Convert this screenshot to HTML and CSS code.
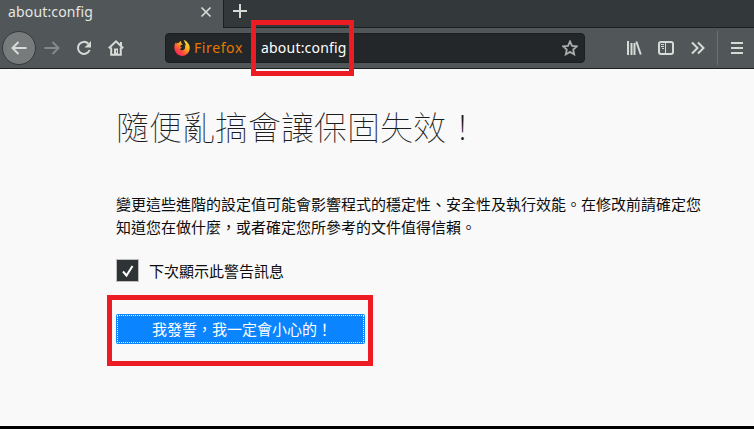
FILE: index.html
```html
<!DOCTYPE html>
<html lang="zh-Hant">
<head>
<meta charset="utf-8">
<title>about:config</title>
<link rel="stylesheet" href="styles.css">
</head>
<body>
<div class="window">
  <header class="tabs">
    <div class="tab">
      <span class="tab-title">about:config</span>
      <svg class="close" width="12" height="12" viewBox="0 0 12 12"><path d="M1.500 1.500l9 9M10.500 1.500l-9 9"/></svg>
    </div>
    <div class="new-tab"><svg width="14" height="14" viewBox="0 0 14 14"><path d="M7 0v14M0 7h14"/></svg></div>
  </header>
  <nav class="toolbar">
    <div class="back"><svg width="16" height="16" viewBox="0 0 16 16"><path d="M15.500 8H1.500M7.500 2L1.500 8l6 6"/></svg></div>
    <svg class="forward" width="16" height="16" viewBox="0 0 16 16"><path d="M.5 8h14M8.500 2l6 6-6 6"/></svg>
    <svg class="reload" width="16" height="16" viewBox="0 0 16 16"><path d="M12.300 3.700A6 6 0 1 0 13.600 10"/><path class="solid" d="M15 1v6.500H8.500z"/></svg>
    <svg class="home" width="16" height="16" viewBox="0 0 16 16"><path d="M.8 8.300L8 1.400l7.200 6.900M3.200 7.500v7.300h9.600V7.500M13 2v4"/><path class="solid" d="M6 15V8.500h4V15z"/><path class="knob" d="M8.500 10.500v2"/></svg>
    <div class="urlbar">
      <svg class="firefox" width="16" height="16" viewBox="0 0 16 16">
        <defs><linearGradient id="flame" x1="1" y1="0" x2="0.2" y2="1"><stop offset="0" stop-color="#fff044"/><stop offset=".4" stop-color="#ffb01c"/><stop offset=".7" stop-color="#ff503a"/><stop offset="1" stop-color="#f21862"/></linearGradient></defs>
        <path fill="url(#flame)" d="M.4 8.300C.1 5.500 1 3.400 2.200 2v1.700C3 2.900 4 2.600 5 2.800 5.600 1.600 6.400 1.200 7 1.100 6.700 2 7 2.800 7.700 3.500L8.700 4.300 6.500 5.600 6.300 7l1.700.5-2.100 1.500c.7 1.500 2.700 1.700 4 .7 1.600-1.100 1.500-3.300.7-4.500l1.200.5C11.600 3.200 10.300 1.900 9.700.1c2 .7 3.300 1.700 4 2.900C15.300 4.500 16 7 15.600 9.300 14.900 13.200 12 16 8.100 16 4 16 .8 12.700.4 8.300z"/>
      </svg>
      <span class="identity">Firefox</span>
      <span class="address">about:config</span>
      <svg class="star" width="16" height="16" viewBox="0 0 16 16"><path d="M8 1.400l2 4.400 4.800.5-3.600 3.200 1 4.900L8 11.900l-4.200 2.500 1-4.900L1.200 6.300 6 5.800z"/></svg>
    </div>
    <div class="actions">
      <svg width="16" height="16" viewBox="0 0 16 16"><path d="M2 1v14M5.500 3v12M8.500 3v12M10.300 1.500L14.800 14.500"/></svg>
      <svg width="16" height="16" viewBox="0 0 16 16"><rect x="1" y="2" width="14" height="12" rx="2"/><path class="thin" d="M7.500 2v12M3 4.500h3M3 6.500h3M4 8.500h2"/></svg>
      <svg width="16" height="16" viewBox="0 0 16 16"><path d="M2 2.500L7.500 8 2 13.500M8 2.500L13.500 8 8 13.500"/></svg>
    </div>
    <div class="menu"><svg width="12" height="12" viewBox="0 0 12 12"><path d="M0 1h12M0 6h12M0 11h12"/></svg></div>
    <div class="mark mark-address"></div>
  </nav>
  <main class="page">
    <h1>隨便亂搞會讓保固失效！</h1>
    <p>變更這些進階的設定值可能會影響程式的穩定性、安全性及執行效能。在修改前請確定您知道您在做什麼，或者確定您所參考的文件值得信賴。</p>
    <label class="option">
      <span class="check"><svg width="14" height="14" viewBox="0 0 14 14"><path d="M2 7.500l3.500 4L11.500 2"/></svg></span>
      <span>下次顯示此警告訊息</span>
    </label>
    <div class="confirm">
      <button type="button">我發誓，我一定會小心的！</button>
      <div class="mark mark-confirm"></div>
    </div>
  </main>
</div>
</body>
</html>
```
FILE: styles.css
```css
* { box-sizing: border-box; }
body { margin: 0; background: #f9f9fa; }
svg { display: block; flex: none; fill: none; stroke: #d8dad6; stroke-width: 2; }
.window {
  width: 754px; height: 429px; display: flex; flex-direction: column;
  overflow: hidden; border-bottom: 3px solid #000;
  font-family: "Noto Sans", "Noto Sans CJK TC", sans-serif;
}
.tabs { height: 28px; flex: none; display: flex; background: #33393b; }
.tab {
  width: 224px; padding: 0 11px 4px 8px; display: flex; align-items: center;
  justify-content: space-between; background: #515658; border-right: 1px solid #1c1f1f;
}
.tab-title { font-size: 14px; line-height: 20px; color: #e4e6e2; letter-spacing: .15px; white-space: nowrap; }
.close { stroke-width: 1.700; }
.new-tab { flex: 1; padding: 4px 9px; border-bottom: 1px solid #1c1f1f; }
.toolbar {
  position: relative; height: 41px; flex: none; display: flex; align-items: center;
  padding-left: 2px; background: #515658; border-bottom: 1px solid #1c1f1f;
}
.back {
  width: 34px; height: 34px; flex: none; display: grid; place-items: center;
  border: 1px solid #34393a; border-radius: 50%; background: #777b7c;
}
.forward { margin-left: 8px; stroke: #85898a; }
.reload { margin-left: 16px; }
.home { margin-left: 16px; }
.solid { fill: #d8dad6; stroke: none; }
.knob { stroke: #515658; stroke-width: 1; }
.urlbar {
  width: 420px; height: 30px; flex: none; margin-left: 41px; padding: 0 6px 0 8px;
  display: flex; align-items: center; background: #232729;
  border: 1px solid #1c1f1f; border-radius: 4px; font-size: 14px; line-height: 20px;
}
.firefox { stroke: none; }
.identity { width: 52px; margin-left: 4px; color: #e57900; letter-spacing: .6px; }
.address { margin-left: 15px; color: #fff; letter-spacing: .2px; white-space: nowrap; }
.star { margin-left: auto; stroke: #a9acab; stroke-width: 1.800; }
.actions { display: flex; gap: 16px; margin-left: 41px; }
.thin { stroke-width: 1; }
.menu { height: 34px; margin-left: 11px; padding-left: 13px; display: flex; align-items: center; border-left: 1px solid #6d7172; }
.mark { position: absolute; border: 5px solid #ed1c24; pointer-events: none; }
.mark-address { left: 251px; top: -8px; width: 103px; height: 56px; }
.page { flex: 1; padding: 33px 50px 0 116px; color: #0c0c0d; font-size: 15px; font-family: "Noto Sans CJK TC", sans-serif; }
h1 { margin: 0; font-size: 33px; line-height: 48px; font-weight: 100; color: #1c1c20; white-space: nowrap; }
p { width: 588px; margin: 42px 0 0; line-height: 23px; }
.option { display: flex; align-items: center; gap: 10px; height: 23px; margin-top: 21px; }
.check { width: 23px; height: 23px; display: grid; place-items: center; border: 1px solid #bcbebf; background: #2e3436; }
.check svg { stroke: #fff; }
.confirm { position: relative; width: 249px; height: 30px; margin-top: 32px; }
button {
  display: block; width: 100%; height: 30px; padding: 0 0 0 3px; border: 0; border-radius: 2px;
  background: #0a84ff; color: #fff; font: inherit; line-height: 30px;
  outline: 1px dotted #fff; outline-offset: -2px;
}
.mark-confirm { left: -9px; top: -19px; width: 266px; height: 71px; }
```
